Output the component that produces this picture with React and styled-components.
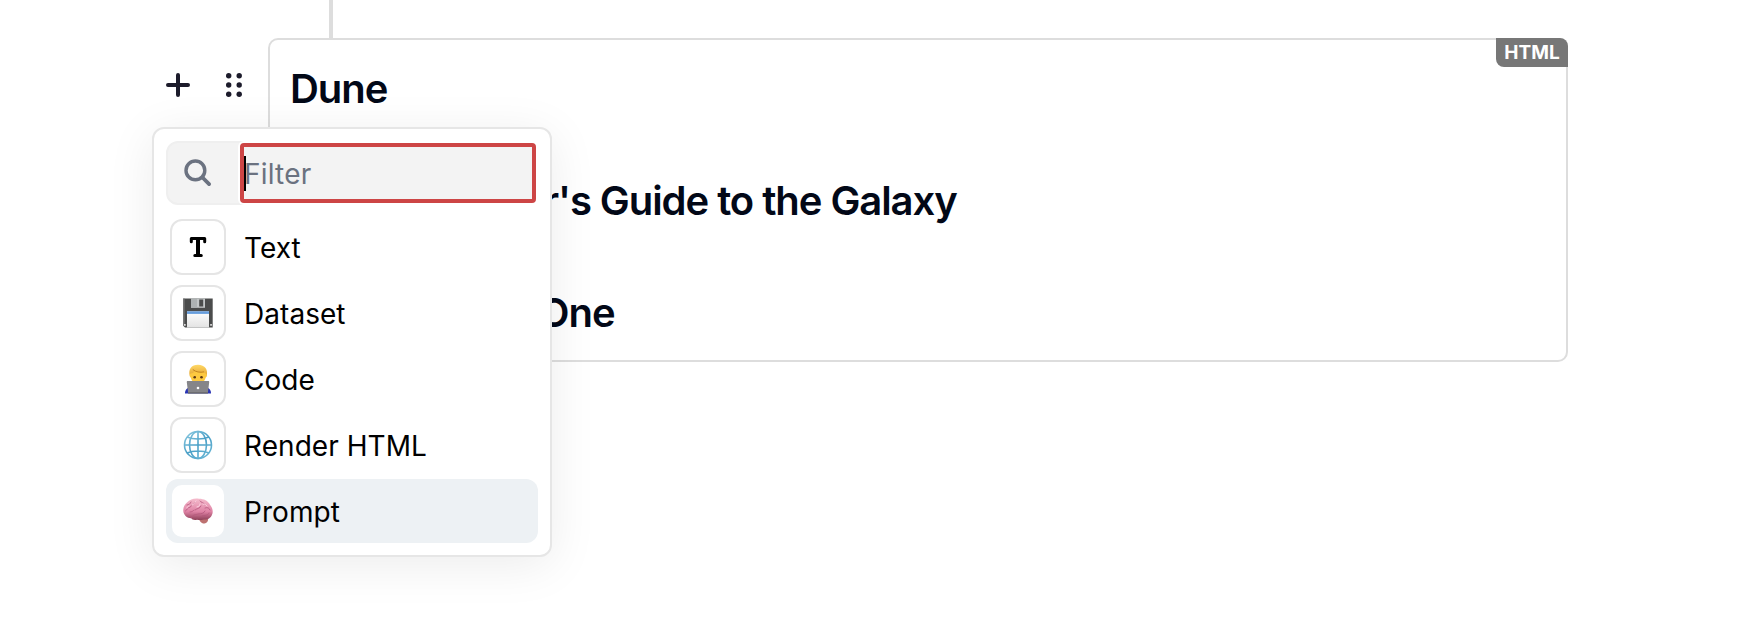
import React from "react";
import styled, { createGlobalStyle, css } from "styled-components";

const GlobalStyle = createGlobalStyle`
  *, *::before, *::after { box-sizing: border-box; }
  body { margin: 0; background: #fff; font-family: Inter, "Liberation Sans", sans-serif; }
`;

const Page = styled.main`
  width: 1742px;
  height: 638px;
  overflow: hidden;
  padding-left: 152px;
`;

const Connector = styled.div`
  width: 4px;
  height: 38px;
  margin-left: 177px;
  background: #ddd;
`;

const Block = styled.section`
  position: relative;
  display: flex;
  align-items: flex-start;
`;

const Controls = styled.div`
  display: flex;
  width: 116px;
  padding: 35px 0 0 14px;
  gap: 32px;
  color: #1c1b2b;
`;

const ControlButton = styled.button`
  display: flex;
  width: 24px;
  height: 24px;
  padding: 0;
  border: 0;
  background: none;
  color: inherit;
  svg { display: block; flex: none; overflow: visible; }
`;

const Card = styled.article`
  position: relative;
  width: 1300px;
  height: 324px;
  padding: 21px 20px;
  border: 2px solid #ddd;
  border-radius: 10px;
`;

const Heading = styled.h3`
  margin: 0 0 56px;
  color: #020817;
  font-size: 40px;
  font-weight: 600;
  line-height: 56px;
  letter-spacing: -1.05px;
`;

const Badge = styled.span`
  position: absolute;
  top: -2px;
  right: -2px;
  width: 72px;
  height: 29px;
  border-radius: 0 8px 0 8px;
  background: #777;
  color: #fff;
  font-size: 19px;
  font-weight: 650;
  line-height: 29px;
  text-align: center;
`;

const Menu = styled.div`
  position: absolute;
  top: 89px;
  left: 0;
  width: 400px;
  height: 430px;
  padding: 12px;
  border: 2px solid #e6e6e6;
  border-radius: 12px;
  background: #fff;
  box-shadow: 0 8px 48px rgba(0, 10, 10, 0.08);
`;

const Search = styled.label`
  display: flex;
  align-items: center;
  height: 64px;
  margin-bottom: 10px;
  padding-left: 16px;
  border: 2px solid #efefef;
  border-radius: 12px;
  background: #f3f3f3;
  color: #6b7280;
  svg { flex: none; }
`;

const Field = styled.span`
  display: flex;
  align-items: center;
  flex: none;
  width: 296px;
  height: 60px;
  margin-left: 28px;
  border: 4px solid #cd4545;
  border-radius: 4px;
  box-shadow: 0 0 0 2px #fff;
  background: #f3f3f3;
  font-size: 28px;
  line-height: 40px;
  letter-spacing: 0.2px;
`;

const Placeholder = styled.span`
  padding-top: 2px;
`;

const Caret = styled.i`
  width: 2px;
  height: 35px;
  margin-right: -2px;
  background: #000;
`;

const List = styled.ul`
  display: flex;
  flex-direction: column;
  gap: 2px;
  margin: 0;
  padding: 0;
  list-style: none;
`;

const IconBox = styled.span`
  display: flex;
  align-items: center;
  justify-content: center;
  width: 56px;
  height: 56px;
  border: 2px solid #e5e5e5;
  border-radius: 12px;
  background: #fff;
  background-clip: padding-box;
`;

const Item = styled.li`
  display: flex;
  align-items: center;
  gap: 18px;
  height: 64px;
  padding: 0 4px;
  border-radius: 12px;
  color: #000;
  font-size: 28px;
  line-height: 40px;
  letter-spacing: 0.05px;
  ${(p) => p.$active && css`
    background: #edf1f4;
    ${IconBox} { border-color: transparent; }
  `}
`;

const Label = styled.span`
  padding-top: 2px;
`;

const PlusIcon = () => (
  <svg width="24" height="24" viewBox="0 0 24 24" fill="none" stroke="currentColor" strokeWidth="4" strokeLinecap="round">
    <path d="M12 2v20M2 12h20" />
  </svg>
);

const GripSvg = styled.svg`
  margin-left: 4px;
`;

const GripIcon = () => (
  <GripSvg width="16" height="24" viewBox="0 0 16 24" fill="currentColor">
    {[2.7, 12, 21.3].map((y) => (
      <g key={y}>
        <circle cx="2.7" cy={y} r="2.7" />
        <circle cx="13.2" cy={y} r="2.7" />
      </g>
    ))}
  </GripSvg>
);

const SearchIcon = () => (
  <svg width="28" height="28" viewBox="0 0 28 28" fill="none" stroke="currentColor" strokeWidth="3.4" strokeLinecap="round">
    <circle cx="11.4" cy="11.4" r="9.4" />
    <path d="M18.5 18.5l6.6 6.6" strokeWidth="3.8" />
  </svg>
);

const TextIcon = () => (
  <svg width="30" height="30" viewBox="0 0 30 30" fill="none" stroke="#000" strokeWidth="3" strokeLinecap="round" strokeLinejoin="round">
    <path d="M8.3 9.7V6.6h13.4v3.1M11.8 23.5h6.5" />
    <path d="M15 7v16" strokeWidth="4" strokeLinecap="butt" />
  </svg>
);

const DiskIcon = () => (
  <svg width="30" height="30" viewBox="0 0 30 30">
    <defs>
      <linearGradient id="disk-label" x2="0" y2="1"><stop stopColor="#fff" /><stop offset="1" stopColor="#e3e3e3" /></linearGradient>
    </defs>
    <path d="M.2.5h29.5v29H2L.2 27.8z" fill="#4b4c4c" />
    <path d="M.2.5h1.4V28H.2z" fill="#777" />
    <path d="M8 .5h14V9.8H8z" fill="#c3c6c7" />
    <path d="M8 .5h6V9.8H8z" fill="#aeb2b3" />
    <path d="M16.2 1.5h4v7h-4z" fill="#4b4c4c" />
    <path d="M4 13.3h22V29.5H4z" fill="url(#disk-label)" />
    <path d="M4 13.3h22v2.6H4z" fill="#669ddd" />
    <path d="M1 26h1.7v1.7H1zM27.2 26h1.7v1.7h-1.7z" fill="#ddd" />
  </svg>
);

const CoderIcon = () => (
  <svg width="30" height="30" viewBox="0 0 30 30">
    <defs>
      <linearGradient id="coder-hair" x2="0" y2="1"><stop stopColor="#ffd967" /><stop offset="1" stopColor="#e3a02c" /></linearGradient>
    </defs>
    <path d="M2 29.5c0-4 2-5.500 5-6h16c3 .5 5 2 5 6z" fill="#2934b4" />
    <path d="M7 12.500C4.500 5.500 8.500.8 15 .8c6.800 0 10.600 5 8.500 11.700z" fill="url(#coder-hair)" />
    <path d="M7.500 9.500c2.500-.2 3.500-1 4.500-2.200 3.500 1.200 6 1.400 8.500.8 1 .8 1.500 1.200 2.500 1.600 1.200.8.8 3.300-.4 4.100-.8 3.700-3.900 6.200-7.400 6.200S8.600 17.500 7.900 13.800C6.500 13 6.300 10.500 7.500 9.500z" fill="#fdc940" />
    <path d="M9.800 5.500c3 2.600 7.200 3.200 11.200 2.400" fill="none" stroke="#c4861f" />
    <circle cx="11.700" cy="13.200" r="1.300" fill="#5b3715" />
    <circle cx="18.500" cy="13.200" r="1.300" fill="#5b3715" />
    <path d="M4.800 17h20.400c.7 0 1.100.5 1 1.200L24.800 29.500H5.200L3.800 18.200C3.700 17.500 4.100 17 4.800 17z" fill="#858589" />
    <path d="M5 28h20v1.500H5z" fill="#6d6d71" />
    <circle cx="15" cy="24" r="1.300" fill="#fff" />
  </svg>
);

const GlobeIcon = () => (
  <svg width="30" height="30" viewBox="0 0 30 30" fill="none" stroke="url(#globe-line)" strokeWidth="1.6">
    <defs>
      <linearGradient id="globe-line" gradientUnits="userSpaceOnUse" x1="4" y1="2" x2="25" y2="28"><stop stopColor="#87c7df" /><stop offset=".5" stopColor="#4ba0c7" /><stop offset="1" stopColor="#69b6d5" /></linearGradient>
    </defs>
    <circle cx="15" cy="15" r="13.5" />
    <ellipse cx="15" cy="15" rx="8.5" ry="13.5" />
    <path d="M15 1.5l.01 27M1.5 15l27 .01M4 7c6 2.700 16 2.700 22 0M4 23c6-2.700 16-2.700 22 0" />
  </svg>
);

const BrainIcon = () => (
  <svg width="30" height="30" viewBox="0 0 30 30">
    <defs>
      <linearGradient id="brain-fill" x2="0" y2="1"><stop stopColor="#f5bccd" /><stop offset=".6" stopColor="#df83a5" /><stop offset="1" stopColor="#8e4058" /></linearGradient>
    </defs>
    <path d="M16 22c0 3 2.500 5.800 5.500 5.500 2-.2 4-2 3.500-5z" fill="#bd7170" />
    <path d="M1.500 18.500C-1 15 .5 9 4 6.500 7 3 12 2 16 2.800c5 0 9 2 11 6 2.500 3 3.500 7 2 10-1.500 4-5 5-8 4.700-4 1-5 .5-7 .2-3 .8-5-.3-6-1.700-3 .5-5-1-6.500-3.500z" fill="url(#brain-fill)" />
    <g fill="none" stroke="#b5577c" strokeWidth=".8" strokeLinecap="round">
      <path d="M2.500 15c2-1 2-4 5-4 1-3 4-3 5-5M8 22c2-4 5-3 7-4 4 0 6-1 7-3M12 14c2-2 5-1 6-4M7 16c2 0 3-1 4-2M17 5c1 2 4 1 5 4M22 12c3-1 4 0 5 2M19 20c3-1 6 0 7-3M4 9c2 0 3-1 4-3" />
    </g>
    <g fill="none" stroke="#ffd9e6" strokeWidth=".9" strokeLinecap="round">
      <path d="M9 9c2-1 3-2 4-4M14 11c2 0 3-2 3-3M20 8c2 0 3 1 4 2M4 12c0-1 1-2 2-2" />
    </g>
  </svg>
);

const items = [
  { label: "Text", Icon: TextIcon },
  { label: "Dataset", Icon: DiskIcon },
  { label: "Code", Icon: CoderIcon },
  { label: "Render HTML", Icon: GlobeIcon },
  { label: "Prompt", Icon: BrainIcon, active: true },
];

export default function App() {
  return (
    <Page>
      <GlobalStyle />
      <Connector />
      <Block>
        <Controls>
          <ControlButton aria-label="Add block"><PlusIcon /></ControlButton>
          <ControlButton aria-label="Move block"><GripIcon /></ControlButton>
        </Controls>
        <Card>
          <Heading>Dune</Heading>
          <Heading>The Hitchhiker's Guide to the Galaxy</Heading>
          <Heading>Ready Player One</Heading>
          <Badge>HTML</Badge>
        </Card>
        <Menu>
          <Search>
            <SearchIcon />
            <Field><Caret /><Placeholder>Filter</Placeholder></Field>
          </Search>
          <List>
            {items.map(({ label, Icon, active }) => (
              <Item key={label} $active={active}>
                <IconBox><Icon /></IconBox>
                <Label>{label}</Label>
              </Item>
            ))}
          </List>
        </Menu>
      </Block>
    </Page>
  );
}
